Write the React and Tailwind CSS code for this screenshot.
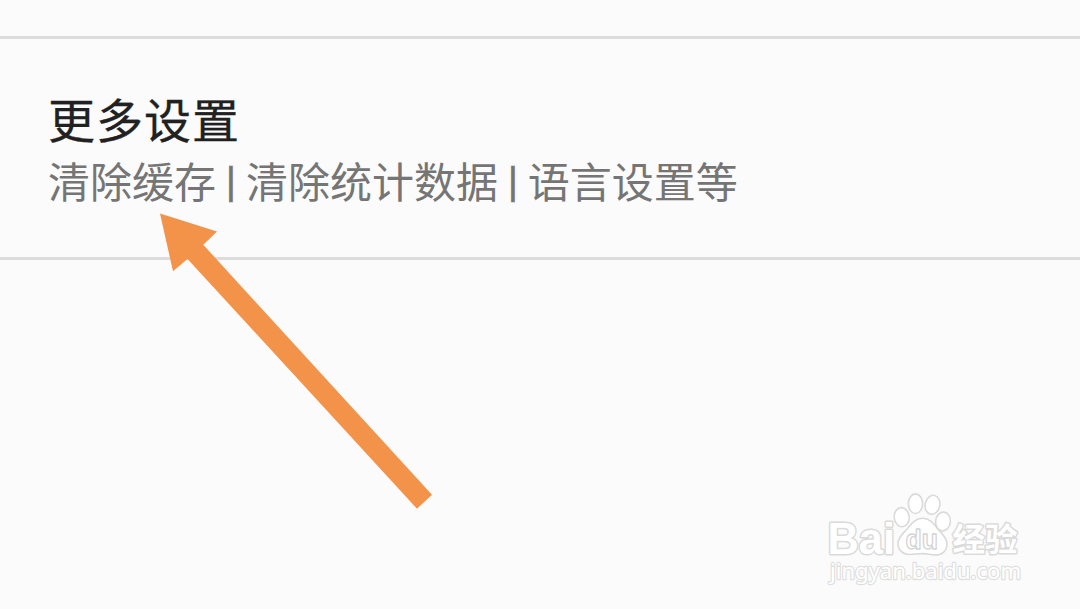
function Arrow() {
  return (
    <svg className="pointer-events-none absolute top-0 left-0" width="1080" height="609" viewBox="0 0 1080 609" aria-hidden="true">
      <path d="M160 213.5 L217 231.5 L203.3 244.8 L432 494.7 L417 508.7 L187.5 259 L173 271.3 Z" fill="#f3934a" />
    </svg>
  );
}

function Watermark() {
  return (
    <svg
      className="absolute top-[485px] left-[820px]"
      width="210"
      height="110"
      viewBox="0 0 210 110"
      fill="#ffffff"
      stroke="#dadada"
      strokeWidth="1.6"
      strokeLinejoin="round"
    >
      <g strokeWidth="3" style={{ paintOrder: "stroke" }}>
        <text x="7.5" y="68.5" fontFamily="'Liberation Sans', sans-serif" fontWeight="700" fontSize="44" textLength="67.5" lengthAdjust="spacingAndGlyphs">
          Bai
        </text>
        <text x="132.5" y="66" fontFamily="'Noto Sans CJK SC', sans-serif" fontWeight="700" fontSize="32" textLength="65" lengthAdjust="spacingAndGlyphs">
          经验
        </text>
        <text x="10" y="94" fontFamily="'Noto Sans', sans-serif" fontWeight="400" fontSize="22" strokeWidth="2.4" stroke="#dfdfdf" textLength="191" lengthAdjust="spacingAndGlyphs">
          jingyan.baidu.com
        </text>
      </g>
      <ellipse cx="81.7" cy="32.2" rx="7.5" ry="9.6" transform="rotate(-6 81.7 32.2)" />
      <ellipse cx="95.5" cy="18.7" rx="7.1" ry="9.8" />
      <ellipse cx="112.5" cy="19.8" rx="7.3" ry="9.6" transform="rotate(12 112.5 19.8)" />
      <ellipse cx="123" cy="36.5" rx="7.4" ry="9.4" transform="rotate(6 123 36.5)" />
      <path d="M102.5 33.3 C94.8 33.3 91 39.2 87 44.2 C83 48.4 78 52.2 78 58.6 C78 65 82.8 69.5 89.5 69.5 C94.5 69.5 97.5 68.6 102.5 68.6 C107.5 68.6 110.5 70 115.5 70 C122.5 70 127 65.4 127 58.8 C127 52.2 121.3 48.6 117.8 44 C113.8 38.8 110 33.3 102.5 33.3 Z" />
      <text x="85.5" y="64" fontFamily="'Liberation Sans', sans-serif" fontWeight="700" fontSize="27" strokeWidth="1.3" stroke="#d4d4d4" textLength="32.5" lengthAdjust="spacingAndGlyphs">
        du
      </text>
    </svg>
  );
}

function Bar() {
  return <span className="relative -top-[2px] [-webkit-text-stroke:0.6px_#757575]">|</span>;
}

export default function App() {
  return (
    <main className="relative flex h-[609px] w-[1080px] flex-col overflow-hidden bg-[#fbfbfb] font-['Roboto','Noto_Sans_CJK_SC',sans-serif]">
      <div className="h-9 shrink-0" />
      <section className="flex h-56 shrink-0 flex-col border-y-[3px] border-[#dcdcdc] px-12 pt-[53px]">
        <h1 className="h-[63px] text-[47px] leading-[60px] tracking-[1px] whitespace-nowrap text-[#212121] [-webkit-text-stroke:0.3px_#212121]">更多设置</h1>
        <p className="h-[58px] text-[42px] leading-[58px] [word-spacing:-0.6px] whitespace-nowrap text-[#757575]">
          清除缓存 <Bar /> 清除统计数据 <Bar /> 语言设置等
        </p>
      </section>
      <Arrow />
      <Watermark />
    </main>
  );
}
